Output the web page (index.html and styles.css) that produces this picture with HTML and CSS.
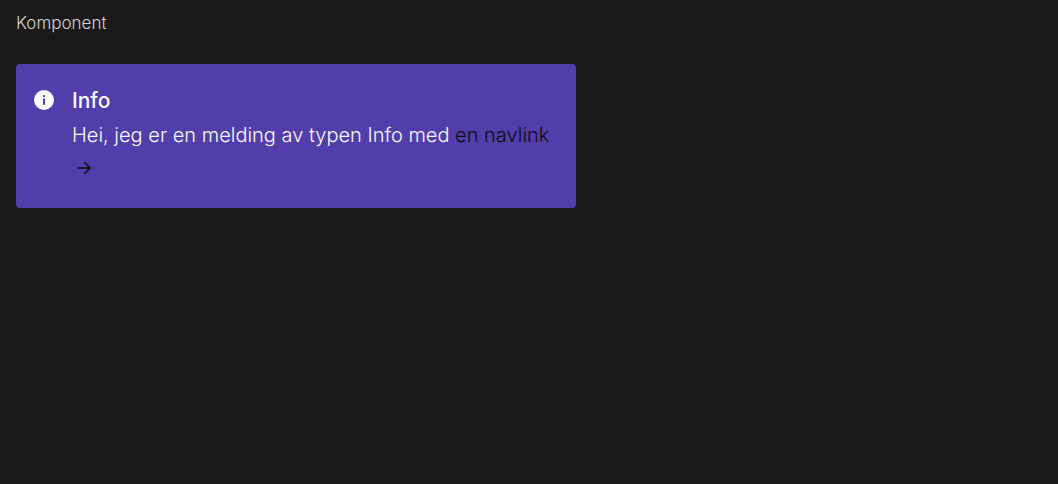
FILE: index.html
```html
<!DOCTYPE html>
<html lang="nb">
<head>
<meta charset="utf-8">
<meta name="viewport" content="width=device-width, initial-scale=1">
<title>Komponent</title>
<link rel="stylesheet" href="styles.css">
</head>
<body>
<main class="example">
  <p class="example-label">Komponent</p>
  <section class="message" aria-labelledby="message-title">
    <svg class="message-icon" viewBox="0 0 20 20" aria-hidden="true">
      <circle cx="10" cy="10" r="10" fill="#f9f9f9"/>
      <path d="M9 5.2h2v1.8H9zM9 8.4h2v6.4H9z" fill="#513eab"/>
    </svg>
    <div class="message-content">
      <h1 class="message-title" id="message-title">Info</h1>
      <p class="message-text">Hei, jeg er en melding av typen Info med <a class="nav-link" href="#">en navlink <svg class="nav-arrow" viewBox="0 0 14 14" aria-hidden="true"><path d="M0.5 7H13M7.5 1.2L13.2 7L7.5 12.8" fill="none" stroke="currentColor" stroke-width="1.5"/></svg></a></p>
    </div>
  </section>
</main>
</body>
</html>
```
FILE: styles.css
```css
body {
  margin: 0;
  background: #1b1a18;
  color: #f9f9f9;
  font-family: Inter, "Liberation Sans", sans-serif;
  font-weight: 300;
}

.example {
  padding: 11px 16px;
}

.example-label {
  margin: 0 0 29px;
  color: #d5d3d0;
  font-size: 17px;
  line-height: 24px;
}

.message {
  box-sizing: border-box;
  display: flex;
  gap: 18px;
  max-width: 560px;
  padding: 20px 24px 25px 18px;
  border-radius: 4px;
  background: #513eab;
}

.message-icon {
  flex: none;
  width: 20px;
  height: 20px;
  margin-top: 6px;
}

.message-content {
  flex: 1;
  min-width: 0;
}

.message-title {
  margin: 0 0 1px;
  font-size: 21px;
  font-weight: 500;
  line-height: 34px;
}

.message-text {
  margin: 0;
  font-size: 20px;
  line-height: 32px;
}

.nav-link {
  color: #0e0d10;
  text-decoration: none;
}

.nav-arrow {
  width: 14px;
  height: 14px;
  margin-left: 5px;
  vertical-align: -1px;
}
```
